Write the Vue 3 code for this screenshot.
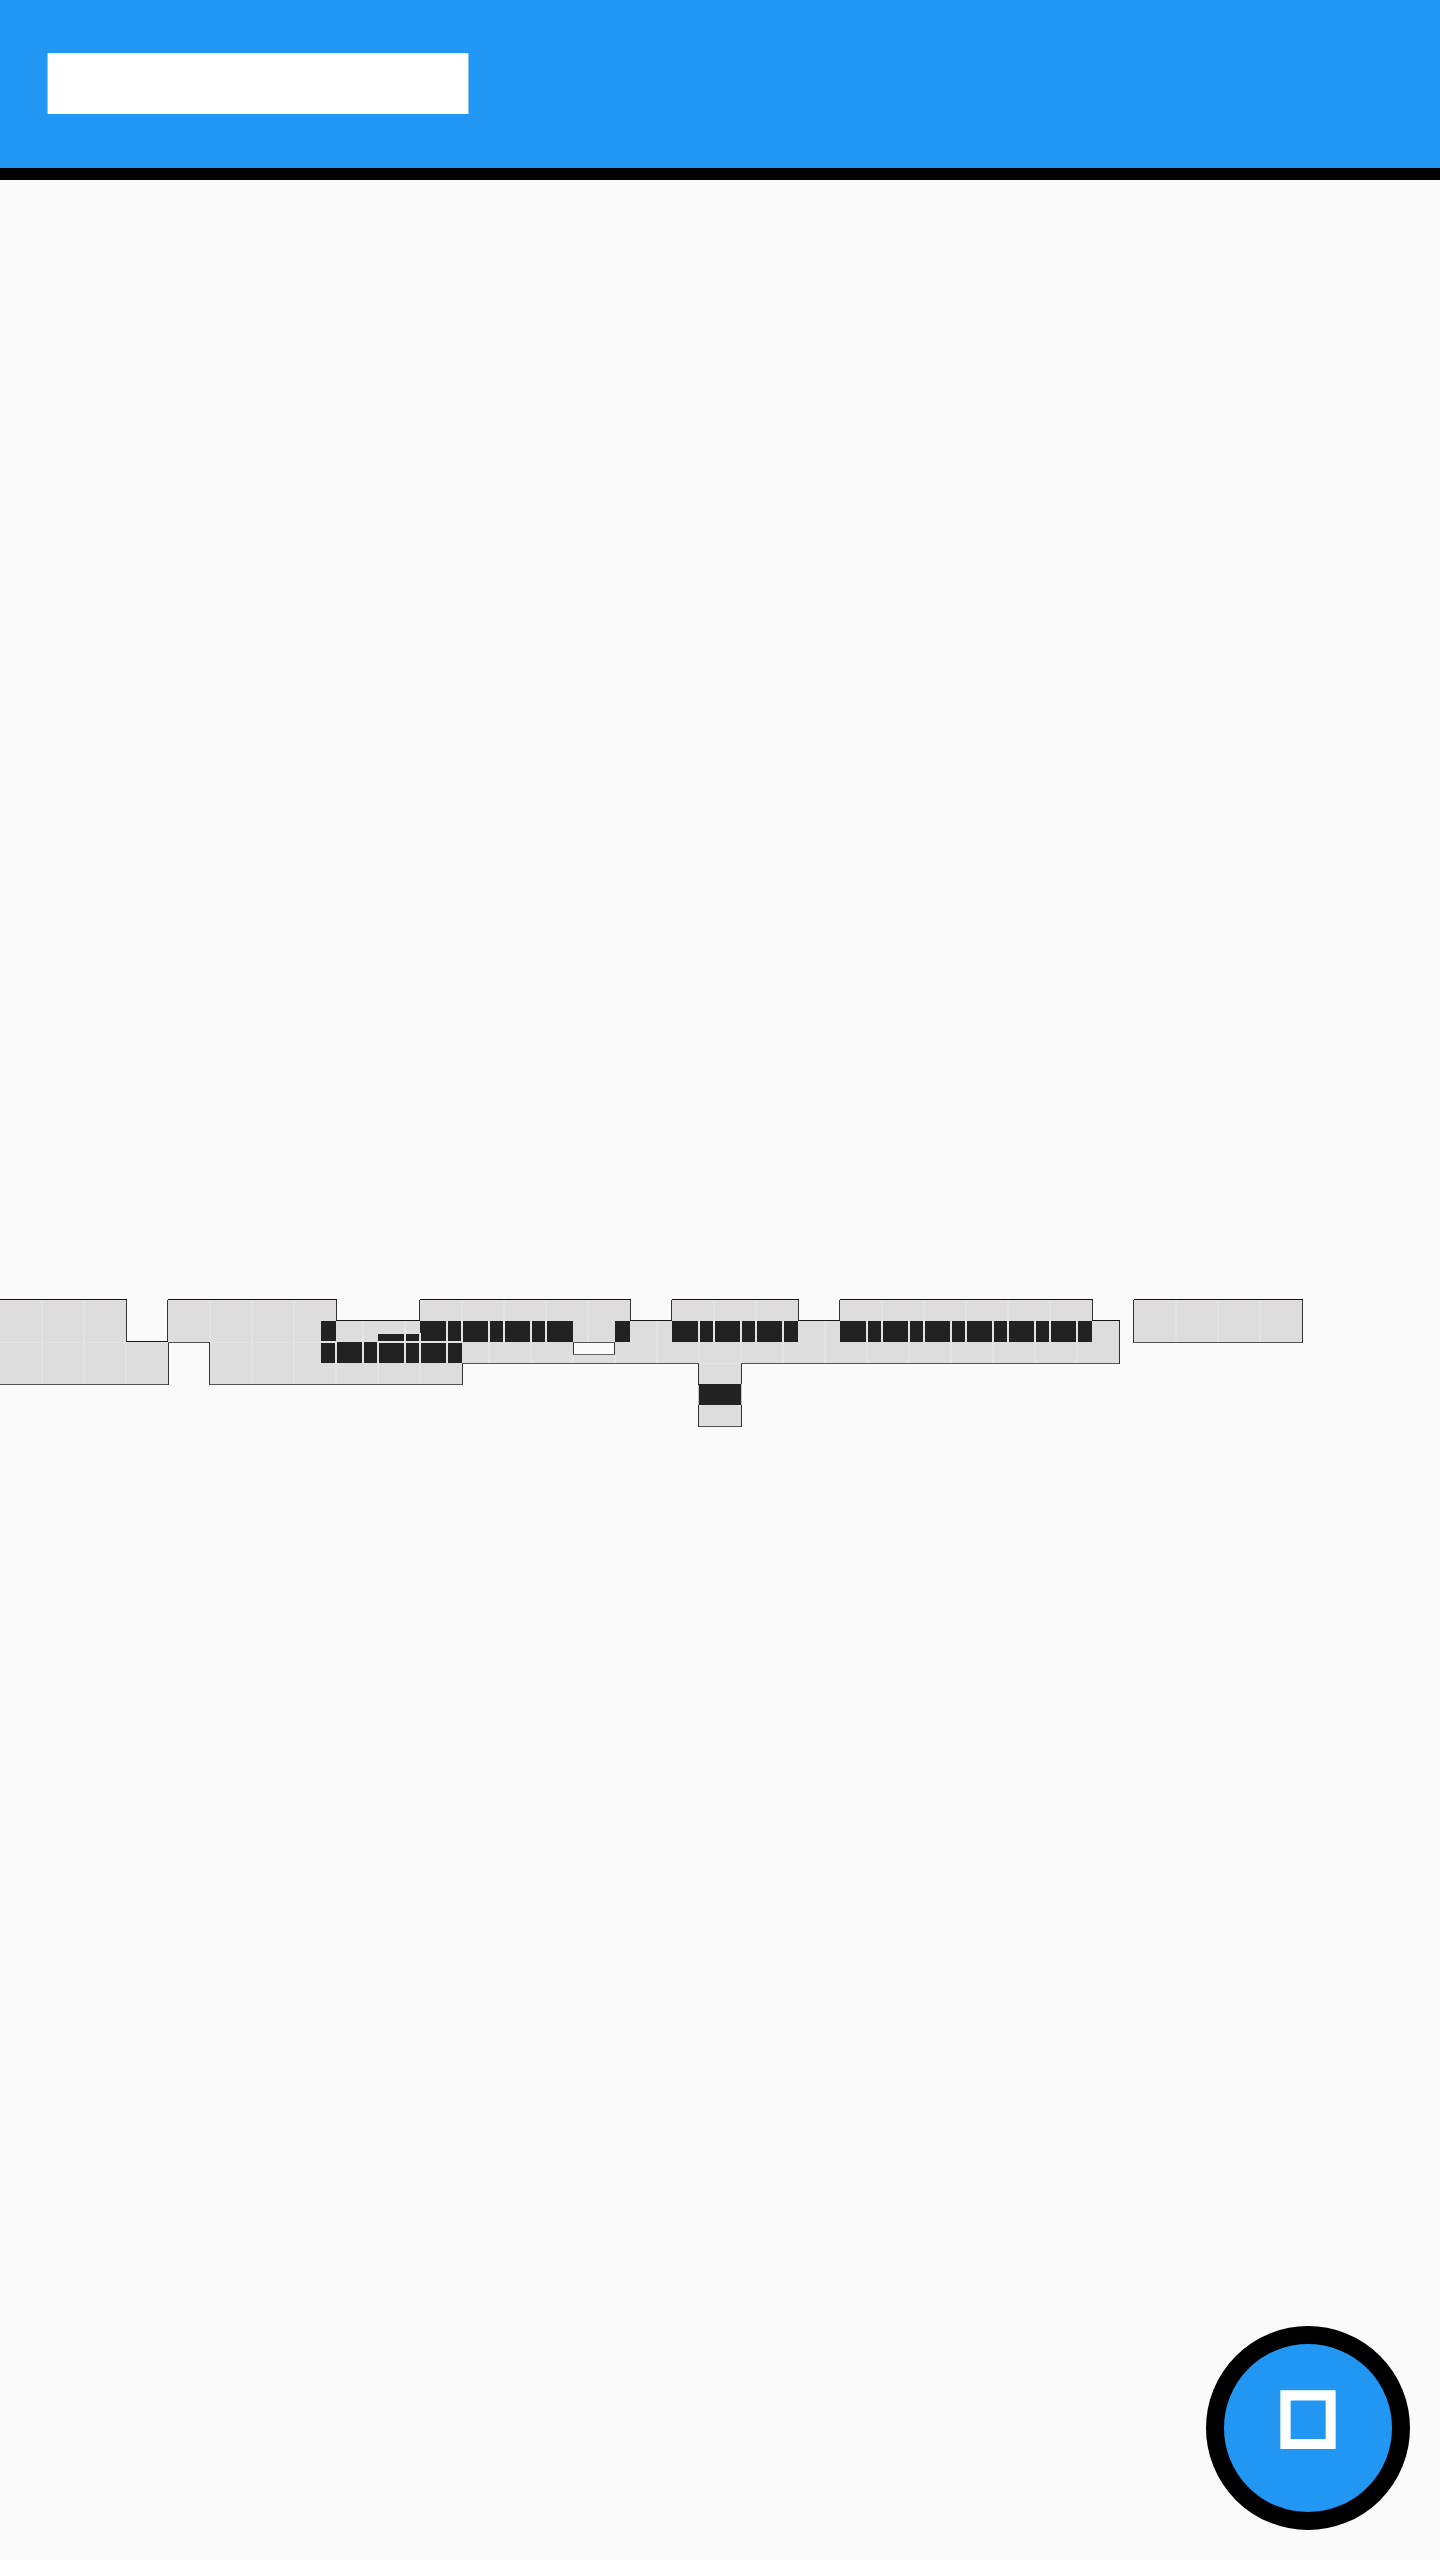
<script setup>
// Each entry is [x, y, width, height] in map units.
const span = (x1, y1, x2, y2) => [x1, y1, x2 - x1, y2 - y1]
const column = (y1, y2, xs) => xs.map((x) => span(x, y1, x + 2, y2))
const row = (y1, y2, pairs) => pairs.map(([a, b]) => span(a, y1, b, y2))

const floors = [
  span(0, 1300, 126, 1342), span(0, 1342, 168, 1384),
  span(168, 1300, 336, 1342), span(210, 1342, 462, 1384),
  span(336, 1321, 1119, 1363),
  span(420, 1300, 630, 1321), span(672, 1300, 798, 1321), span(840, 1300, 1092, 1321),
  span(699, 1363, 741, 1426), span(1134, 1300, 1302, 1342)
]

const shine = row(1300, 1301, [
  [0, 126], [168, 336], [420, 630], [672, 798], [840, 1092], [1134, 1302]
])

const seams = [
  ...column(1300, 1384, [41, 83, 209, 251, 293]),
  ...column(1342, 1384, [125, 335, 377]),
  ...column(1333, 1384, [419]),
  ...column(1321, 1363, [
    362, 404, 446, 488, 530, 656, 698, 740, 782,
    824, 866, 908, 950, 992, 1034, 1076
  ]),
  ...column(1355, 1363, [572, 614]),
  ...column(1300, 1342, [
    461, 503, 545, 587, 713, 755, 881, 923, 965, 1007, 1049, 1175, 1217, 1259
  ]),
  span(0, 1342, 168, 1343), span(210, 1342, 321, 1343),
  span(321, 1341, 336, 1343), span(378, 1341, 462, 1343),
  span(699, 1363, 741, 1364)
]

const walls = [
  ...row(1321, 1341, [[321, 336], [421, 446], [448, 461]]),
  span(420, 1321, 421, 1333),
  ...row(1334, 1341, [[378, 404], [406, 419]]),
  ...row(1321, 1342, [
    [463, 488], [490, 503], [505, 530], [532, 545], [547, 573], [615, 630],
    [672, 698], [700, 713], [715, 740], [742, 755], [757, 782], [784, 798],
    [840, 866], [868, 881], [883, 908], [910, 923], [925, 950], [952, 965],
    [967, 992], [994, 1007], [1009, 1034], [1036, 1049], [1051, 1076], [1078, 1092]
  ]),
  ...row(1342, 1363, [[337, 362], [364, 377]]),
  ...row(1343, 1363, [[321, 335], [379, 404], [406, 419], [421, 446], [448, 462]]),
  span(699, 1384, 741, 1405)
]

const lower = [
  ...row(1384, 1385, [[0, 169], [209, 463]]),
  ...row(1342, 1343, [[168, 210], [1133, 1303], [573, 615]]),
  ...row(1363, 1364, [[462, 699], [741, 1120]]),
  span(698, 1426, 742, 1427)
]

const sides = [
  ...[[126, 1300, 1342], [167, 1300, 1342], [168, 1343, 1385], [209, 1343, 1385],
    [336, 1300, 1321], [419, 1300, 1321], [462, 1364, 1385], [630, 1300, 1321],
    [671, 1300, 1321], [798, 1300, 1321], [839, 1300, 1321], [1092, 1300, 1321],
    [1119, 1321, 1364], [698, 1364, 1385], [741, 1364, 1384], [698, 1405, 1427],
    [741, 1405, 1427], [1133, 1300, 1343], [1302, 1300, 1343],
    [573, 1343, 1354], [614, 1343, 1354]
  ].map(([x, a, b]) => span(x, a, x + 1, b))
]

const upper = [
  ...row(1299, 1300, [
    [0, 127], [168, 337], [420, 631], [672, 799], [840, 1093], [1134, 1303]
  ]),
  ...row(1341, 1342, [[126, 168]]),
  ...row(1320, 1321, [[336, 420], [630, 672], [798, 840], [1092, 1120]])
]

const layers = [
  { name: 'floor', rects: floors },
  { name: 'shine', rects: shine },
  { name: 'seam', rects: seams },
  { name: 'wall', rects: walls },
  { name: 'opening', rects: [span(573, 1342, 615, 1355)] },
  { name: 'faint', rects: [span(698, 1385, 699, 1405), span(741, 1384, 742, 1405)] },
  { name: 'ledge', rects: [span(573, 1354, 615, 1355)] },
  { name: 'lower', rects: lower },
  { name: 'side', rects: sides },
  { name: 'upper', rects: upper }
]
</script>

<template>
  <div class="app">
    <header class="bar">
      <svg class="title" width="422" height="62" viewBox="0 0 422 62">
        <rect x="0.55" y="0.15" width="420.9" height="60.85" fill="#fff" />
      </svg>
    </header>
    <main class="stage">
      <svg class="map" width="1440" height="140" viewBox="0 1290 1440 140" shape-rendering="crispEdges">
        <g v-for="layer in layers" :key="layer.name" :class="layer.name">
          <rect
            v-for="(r, i) in layer.rects"
            :key="i"
            :x="r[0]"
            :y="r[1]"
            :width="r[2]"
            :height="r[3]"
          />
        </g>
      </svg>
    </main>
    <button class="fab" type="button">
      <svg width="168" height="168" viewBox="1224 2344 168 168">
        <path
          d="M1280.35 2390.35H1335.65V2449H1280.35ZM1290.65 2400.5V2439H1325.65V2400.5Z"
          fill="#fff"
          fill-rule="evenodd"
        />
      </svg>
    </button>
  </div>
</template>

<style>
body {
  margin: 0;
  background: #fafafa;
}
</style>

<style scoped>
.app {
  position: relative;
  display: flex;
  flex-direction: column;
  width: 1440px;
  height: 2560px;
  overflow: hidden;
  background: #fafafa;
  font-family: Roboto, sans-serif;
}

.bar {
  box-sizing: border-box;
  flex: none;
  height: 180px;
  padding: 53px 47px 0;
  background: #2196f3;
  border-bottom: 12px solid #000;
}

.title,
.map,
.fab svg {
  display: block;
}

.stage {
  flex: 1;
  padding-top: 1110px;
}

.floor { fill: #ddd; }
.shine { fill: #e0dce0; }
.seam { fill: #e3e3e3; }
.wall { fill: #222; }
.opening { fill: #fafafa; }
.faint { fill: #c4c4c4; }
.ledge { fill: #666; }
.lower { fill: #555; }
.side { fill: #333; }
.upper { fill: #151315; }

.fab {
  position: absolute;
  right: 30px;
  bottom: 30px;
  box-sizing: border-box;
  width: 204px;
  height: 204px;
  padding: 0;
  background: #2196f3;
  border: 18px solid #000;
  border-radius: 50%;
}
</style>
